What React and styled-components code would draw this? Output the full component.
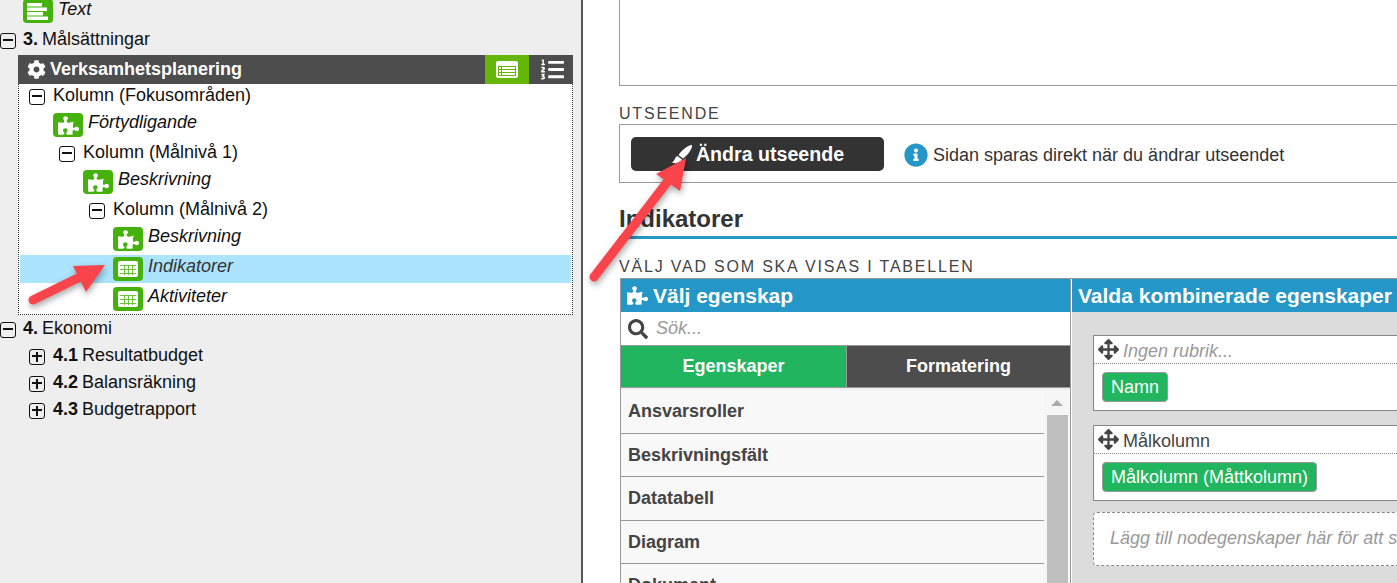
import React from "react";
import styled, { createGlobalStyle } from "styled-components";
import { FaPuzzlePiece, FaCog, FaSearch, FaArrowsAlt, FaInfoCircle, FaListOl } from "react-icons/fa";

const Global = createGlobalStyle`
  html, body { margin: 0; padding: 0; width: 1397px; height: 583px; overflow: hidden; background: #fff; }
  body { font-family: "Liberation Sans", Arial, sans-serif; color: #111; }
  * { box-sizing: border-box; }
`;

const Page = styled.div`
  position: relative;
  display: flex;
  width: 1397px;
  height: 583px;
  overflow: hidden;
`;

const Sidebar = styled.aside`
  flex: 0 0 583px;
  height: 583px;
  background: #eeeeee;
  border-right: 2px solid #555;
  overflow: hidden;
`;

const TreeRow = styled.div`
  display: flex;
  align-items: center;
  flex-shrink: 0;
  height: 27px;
  padding-left: ${(p) => p.$indent}px;
  font-size: 18px;
  white-space: nowrap;
  b { font-weight: 700; margin-right: 4px; }
`;

const ChapterRow = styled(TreeRow)`
  margin-top: 1px;
`;

const Toggle = styled.span`
  position: relative;
  flex: 0 0 16px;
  width: 16px;
  height: 16px;
  margin-right: ${(p) => p.$gap ?? 8}px;
  margin-top: 2px;
  border: 1.5px solid #111;
  border-radius: 3px;
  &::before {
    content: "";
    position: absolute;
    left: 2px; right: 2px; top: 5.5px;
    height: 2px;
    background: #111;
  }
  &::after {
    content: "";
    display: ${(p) => (p.$plus ? "block" : "none")};
    position: absolute;
    top: 2px; bottom: 2px; left: 5.5px;
    width: 2px;
    background: #111;
  }
`;

const NodeRow = styled.div`
  display: flex;
  align-items: center;
  height: 28px;
  margin-top: 2px;
  padding-left: ${(p) => p.$indent}px;
  font-size: 18px;
  font-style: italic;
  background: ${(p) => (p.$active ? "#ace3fd" : "transparent")};
  color: ${(p) => (p.$active ? "#333" : "#111")};
`;

const NodeIcon = styled.span`
  flex: 0 0 30px;
  width: 30px;
  height: 24px;
  margin-right: 5px;
  display: flex;
  align-items: center;
  justify-content: center;
  border-radius: 4px;
  background: #44b20a;
  color: #fff;
  font-size: 21px;
`;

const NodeLabel = styled.span`
  padding-bottom: 6px;
`;

const TopNode = styled(NodeRow)`
  margin-top: -3px;
  ${NodeLabel} { padding-bottom: 4px; }
`;

const Section = styled.section`
  margin: 2px 8px 0 18px;
  width: 555px;
`;

const SectionHead = styled.div`
  display: flex;
  align-items: stretch;
  height: 29px;
  background: #4d4d4d;
  color: #fff;
`;

const SectionTitle = styled.div`
  flex: 1;
  display: flex;
  align-items: center;
  gap: 4px;
  padding-left: 9px;
  font-size: 18px;
  font-weight: 700;
  svg { font-size: 19px; }
`;

const HeadButton = styled.div`
  flex: 0 0 ${(p) => p.$w}px;
  display: flex;
  align-items: center;
  justify-content: center;
  margin-left: 2px;
  background: ${(p) => (p.$on ? "#64b607" : "#4d4d4d")};
  color: #fff;
  font-size: 23px;
`;

const SectionBody = styled.div`
  background: #fff;
  border: 1px dotted #333;
  border-top: 0;
  padding: 0 1px 1px;
  ${TreeRow}:first-child { height: 25px; padding-bottom: 2px; }
`;

const Main = styled.main`
  flex: 0 0 1100px;
  height: 700px;
  padding-left: 36px;
  display: flex;
  flex-direction: column;
  > * { flex-shrink: 0; }
`;

const TopBox = styled.div`
  height: 86px;
  width: 1000px;
  border: 1px solid #999;
  border-top: 0;
`;

const FieldLabel = styled.div`
  font-size: 16px;
  letter-spacing: 1.8px;
  line-height: 18px;
  color: #444;
  text-transform: uppercase;
`;

const LookLabel = styled(FieldLabel)`
  margin-top: 19px;
`;

const LookBox = styled.div`
  display: flex;
  align-items: center;
  height: 59px;
  margin-top: 1px;
  width: 1000px;
  padding-left: 11px;
  border: 1px solid #999;
`;

const LookButton = styled.div`
  display: flex;
  align-items: center;
  justify-content: center;
  width: 253px;
  height: 34px;
  padding-top: 1px;
  gap: 3px;
  background: #333;
  color: #fff;
  border-radius: 5px;
  font-size: 19.6px;
  font-weight: 700;
`;

const Hint = styled.div`
  display: flex;
  align-items: center;
  gap: 5px;
  margin: 3px 0 0 20px;
  font-size: 18px;
  color: #333;
  svg { color: #2596c8; font-size: 24px; }
`;

const Heading = styled.h2`
  margin: 22px 0 0;
  height: 34px;
  width: 1000px;
  font-size: 24px;
  line-height: 27px;
  font-weight: 700;
  color: #333;
  border-bottom: 3px solid #2596c8;
`;

const TableLabel = styled(FieldLabel)`
  margin-top: 19px;
`;

const Builder = styled.div`
  display: flex;
  width: 1000px;
  height: 360px;
  margin-top: 2px;
  margin-left: 1px;
  border-top: 1px solid #999;
`;

const PickColumn = styled.div`
  flex: 0 0 451px;
  display: flex;
  flex-direction: column;
  border-left: 1px solid #999;
  border-right: 1px solid #999;
`;

const PanelHead = styled.div`
  display: flex;
  align-items: center;
  flex-shrink: 0;
  gap: 5px;
  height: 33px;
  padding-left: 6px;
  background: #2596c8;
  color: #fff;
  font-size: 21px;
  font-weight: 700;
  white-space: nowrap;
  svg { font-size: 21px; }
`;

const Search = styled.div`
  display: flex;
  align-items: center;
  flex-shrink: 0;
  gap: 8px;
  height: 34px;
  padding-left: 7px;
  background: #fff;
  border-bottom: 1px solid #999;
  color: #999;
  font-size: 18px;
  font-style: italic;
  svg { color: #444; font-size: 20px; }
`;

const Tabs = styled.div`
  display: flex;
  flex-shrink: 0;
  height: 42px;
  border-bottom: 1px solid #999;
`;

const Tab = styled.div`
  flex: ${(p) => (p.$active ? "0 0 225px" : "1")};
  display: flex;
  align-items: center;
  justify-content: center;
  background: ${(p) => (p.$active ? "#22b560" : "#4d4d4d")};
  border-left: ${(p) => (p.$active ? "0" : "1px solid #999")};
  color: #fff;
  font-size: 18px;
  font-weight: 700;
`;

const ListWrap = styled.div`
  flex: 1;
  display: flex;
  background: #f8f8f8;
  border-top: 2px solid #eee;
  overflow: hidden;
`;

const List = styled.div`
  flex: 0 0 423px;
`;

const ListItem = styled.div`
  height: 43.5px;
  padding-top: 9px;
  padding-left: 7px;
  border-bottom: 1px solid #999;
  font-size: 18px;
  line-height: 24px;
  font-weight: 700;
  color: #444;
`;

const Scrollbar = styled.div`
  flex: 1;
  display: flex;
  flex-direction: column;
  align-items: center;
  padding: 0 2px;
  background: #f6f6f6;
`;

const ScrollUp = styled.div`
  flex: 0 0 25px;
  display: flex;
  align-items: center;
  &::before {
    content: "";
    border-left: 6px solid transparent;
    border-right: 6px solid transparent;
    border-bottom: 6px solid #aaa;
  }
`;

const ScrollThumb = styled.div`
  flex: 1;
  width: 21px;
  background: #bfbfbf;
`;

const ChosenColumn = styled.div`
  flex: 1;
  display: flex;
  flex-direction: column;
  min-width: 0;
  border-left: 1px solid #fff;
`;

const ChosenBody = styled.div`
  flex: 1;
  display: flex;
  flex-direction: column;
  gap: 14px;
  padding: 23px 0 0 21px;
  background: #dcdcdc;
`;

const Card = styled.div`
  flex-shrink: 0;
  height: 76px;
  background: #fff;
  border: 1px solid #888;
`;

const CardHead = styled.div`
  display: flex;
  align-items: center;
  gap: 4px;
  height: 28px;
  padding-left: 4px;
  border-bottom: 1px dotted #888;
  font-size: 18px;
  font-style: ${(p) => (p.$empty ? "italic" : "normal")};
  color: ${(p) => (p.$empty ? "#999" : "#444")};
  svg { color: #444; font-size: 21px; }
`;

const CardTitle = styled.span`
  padding-top: 4px;
`;

const Chip = styled.span`
  display: inline-flex;
  align-items: center;
  height: 30px;
  margin: 8px 0 0 8px;
  padding: 0 8px;
  background: #22b560;
  border: 1px solid #999;
  border-radius: 4px;
  color: #fff;
  font-size: 18px;
  white-space: nowrap;
`;

const Drop = styled.div`
  flex-shrink: 0;
  height: 54px;
  margin-top: -3px;
  display: flex;
  align-items: center;
  padding: 0 0 2px 16px;
  background: #fff;
  border: 1px dashed #888;
  border-radius: 4px;
  color: #999;
  font-size: 18px;
  font-style: italic;
  white-space: nowrap;
`;

const Overlay = styled.svg`
  position: absolute;
  inset: 0;
  width: 1397px;
  height: 583px;
  pointer-events: none;
  filter: drop-shadow(1px 3px 3px rgba(0, 0, 0, 0.35));
`;

const TextGlyph = () => (
  <svg width="30" height="24" viewBox="0 0 30 24" fill="#fff">
    <rect x="4" y="4" width="15" height="3.5" />
    <rect x="4" y="8.5" width="20" height="3.5" />
    <rect x="4" y="13" width="16" height="3.5" />
    <rect x="4" y="17.5" width="21" height="3.5" />
  </svg>
);

const GridGlyph = () => (
  <svg width="20" height="16" viewBox="0 0 20 16">
    <rect width="20" height="16" rx="2" fill="#fff" />
    <g fill="#6cc238">
      <rect x="2" y="4" width="16" height="1" />
      <rect x="2" y="8" width="16" height="1" />
      <rect x="2" y="12" width="16" height="1" />
      <rect x="6" y="4" width="1" height="10" />
      <rect x="10" y="4" width="1" height="10" />
      <rect x="14" y="4" width="1" height="10" />
    </g>
  </svg>
);

const RowsGlyph = () => (
  <svg width="22" height="17" viewBox="0 0 22 17">
    <rect width="22" height="17" rx="2" fill="#fff" />
    <g fill="#64b607">
      <rect x="2" y="5" width="18" height="1" />
      <rect x="2" y="8" width="18" height="1" />
      <rect x="2" y="11" width="18" height="1" />
      <rect x="2" y="5" width="1" height="9" />
      <rect x="5" y="5" width="1" height="9" />
      <rect x="19" y="5" width="1" height="9" />
      <rect x="2" y="14" width="18" height="1" />
    </g>
  </svg>
);

const BrushGlyph = () => (
  <svg width="22" height="20" viewBox="0 0 22 20" fill="#fff">
    <path d="M21 1C22 4 16 12 12 14.5L7.5 11C10 7 17 1 21 1Z" />
    <path d="M6.5 12L11 15.5C10 18.5 6 20.5 0.5 18.5C4 17.5 3.5 13 6.5 12Z" />
  </svg>
);

const items = ["Ansvarsroller", "Beskrivningsfält", "Datatabell", "Diagram", "Dokument"];

export default function App() {
  return (
    <Page>
      <Global />
      <Sidebar>
        <TopNode $indent={23}>
          <NodeIcon><TextGlyph /></NodeIcon>
          <NodeLabel>Text</NodeLabel>
        </TopNode>
        <ChapterRow $indent={0}>
          <Toggle $gap={7} />
          <span><b>3.</b>Målsättningar</span>
        </ChapterRow>
        <Section>
          <SectionHead>
            <SectionTitle><FaCog />Verksamhetsplanering</SectionTitle>
            <HeadButton $w={44} $on><RowsGlyph /></HeadButton>
            <HeadButton $w={42}><FaListOl /></HeadButton>
          </SectionHead>
          <SectionBody>
            <TreeRow $indent={9}><Toggle />Kolumn (Fokusområden)</TreeRow>
            <NodeRow $indent={33}><NodeIcon><FaPuzzlePiece /></NodeIcon><NodeLabel>Förtydligande</NodeLabel></NodeRow>
            <TreeRow $indent={39}><Toggle />Kolumn (Målnivå 1)</TreeRow>
            <NodeRow $indent={63}><NodeIcon><FaPuzzlePiece /></NodeIcon><NodeLabel>Beskrivning</NodeLabel></NodeRow>
            <TreeRow $indent={69}><Toggle />Kolumn (Målnivå 2)</TreeRow>
            <NodeRow $indent={93}><NodeIcon><FaPuzzlePiece /></NodeIcon><NodeLabel>Beskrivning</NodeLabel></NodeRow>
            <NodeRow $indent={93} $active><NodeIcon><GridGlyph /></NodeIcon><NodeLabel>Indikatorer</NodeLabel></NodeRow>
            <NodeRow $indent={93}><NodeIcon><GridGlyph /></NodeIcon><NodeLabel>Aktiviteter</NodeLabel></NodeRow>
          </SectionBody>
        </Section>
        <TreeRow $indent={0}><Toggle $gap={7} /><span><b>4.</b>Ekonomi</span></TreeRow>
        <TreeRow $indent={29}><Toggle $plus /><span><b>4.1</b>Resultatbudget</span></TreeRow>
        <TreeRow $indent={29}><Toggle $plus /><span><b>4.2</b>Balansräkning</span></TreeRow>
        <TreeRow $indent={29}><Toggle $plus /><span><b>4.3</b>Budgetrapport</span></TreeRow>
      </Sidebar>
      <Main>
        <TopBox />
        <LookLabel>Utseende</LookLabel>
        <LookBox>
          <LookButton><BrushGlyph />Ändra utseende</LookButton>
          <Hint><FaInfoCircle />Sidan sparas direkt när du ändrar utseendet</Hint>
        </LookBox>
        <Heading>Indikatorer</Heading>
        <TableLabel>Välj vad som ska visas i tabellen</TableLabel>
        <Builder>
          <PickColumn>
            <PanelHead><FaPuzzlePiece />Välj egenskap</PanelHead>
            <Search><FaSearch />Sök...</Search>
            <Tabs>
              <Tab $active>Egenskaper</Tab>
              <Tab>Formatering</Tab>
            </Tabs>
            <ListWrap>
              <List>
                {items.map((t) => <ListItem key={t}>{t}</ListItem>)}
              </List>
              <Scrollbar>
                <ScrollUp />
                <ScrollThumb />
              </Scrollbar>
            </ListWrap>
          </PickColumn>
          <ChosenColumn>
            <PanelHead>Valda kombinerade egenskaper</PanelHead>
            <ChosenBody>
              <Card>
                <CardHead $empty><FaArrowsAlt /><CardTitle>Ingen rubrik...</CardTitle></CardHead>
                <Chip>Namn</Chip>
              </Card>
              <Card>
                <CardHead><FaArrowsAlt /><CardTitle>Målkolumn</CardTitle></CardHead>
                <Chip>Målkolumn (Måttkolumn)</Chip>
              </Card>
              <Drop>Lägg till nodegenskaper här för att skapa en kolumn</Drop>
            </ChosenBody>
          </ChosenColumn>
        </Builder>
      </Main>
      <Overlay viewBox="0 0 1397 583">
        <path d="M33 300 L82 276" stroke="#f9444c" strokeWidth="9" strokeLinecap="round" fill="none" />
        <polygon points="105,265 73,266 86,292" fill="#f9444c" />
        <path d="M594 277 L668 181" stroke="#f9444c" strokeWidth="9" strokeLinecap="round" fill="none" />
        <polygon points="686,158 656,174 680,191" fill="#f9444c" />
      </Overlay>
    </Page>
  );
}
